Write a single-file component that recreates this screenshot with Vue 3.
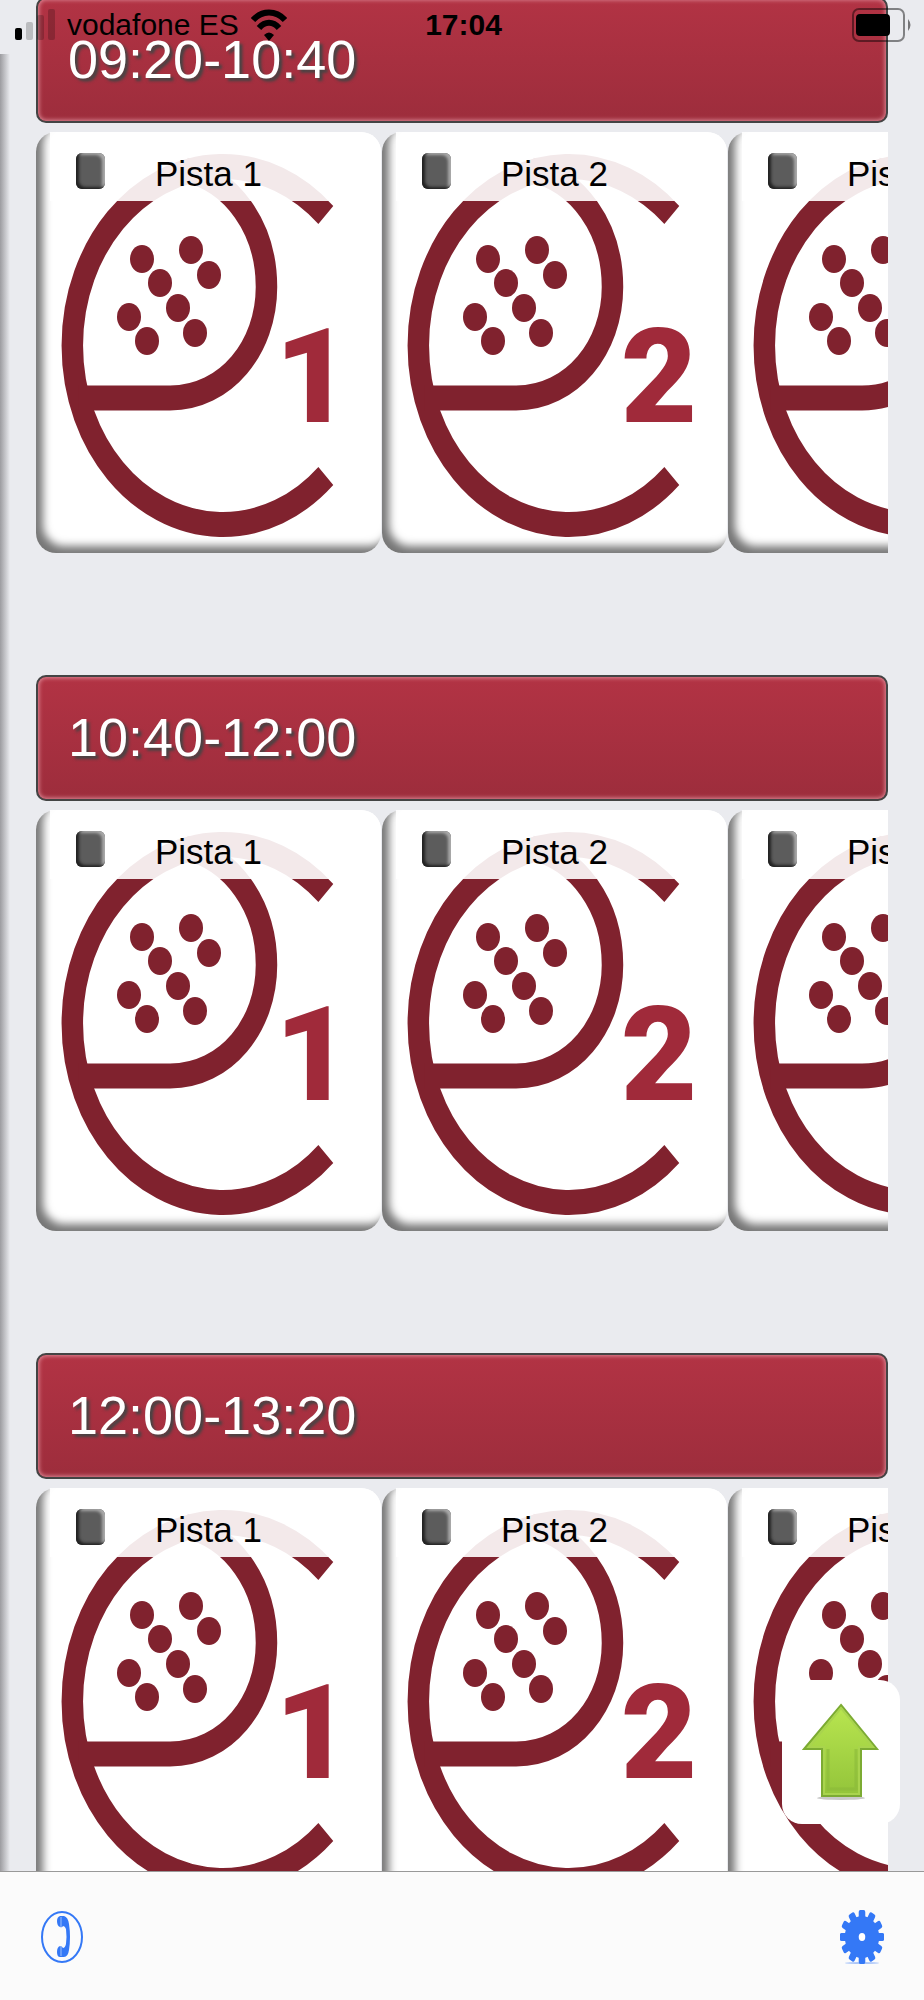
<template>
  <div class="screen">
    <header class="status">
      <div class="carrier">
        <svg class="signal" viewBox="0 0 40 32" aria-hidden="true">
          <rect x="0" y="19" width="7" height="12" rx="2" />
          <rect class="off" x="11" y="13" width="7" height="18" rx="2" />
          <rect class="off" x="22" y="6" width="7" height="25" rx="2" />
          <rect class="off" x="33" y="0" width="7" height="31" rx="2" />
        </svg>
        <span>vodafone ES</span>
        <svg class="wifi" viewBox="0 0 36 32" aria-hidden="true">
          <path d="M2 11 C11 1 25 1 34 11" />
          <path d="M8 19 C14 12 22 12 28 19" />
          <path class="dot" d="M13 26 Q18 21 23 26 L18 32 Z" />
        </svg>
      </div>
      <time class="clock">17:04</time>
      <svg class="battery" viewBox="0 0 60 34" aria-hidden="true">
        <rect class="shell" x="1" y="1" width="51" height="32" rx="6" />
        <rect x="4" y="6" width="34" height="22" rx="4" />
        <path class="cap" d="M56 11 Q61 17 56 23 Z" />
      </svg>
    </header>

    <div class="edge"></div>

    <main ref="list" class="list">
      <section v-for="slot in slots" :key="slot" class="slot">
        <h2>{{ slot }}</h2>
        <div class="courts">
          <article v-for="court in courts" :key="court" class="card">
            <svg class="logo" viewBox="0 0 345 421" aria-hidden="true">
              <g transform="scale(0.86 1)">
                <path d="M337 83 A175 179 0 1 0 337 344" />
                <path d="M174 38 C227 48 268 95 268 155 C268 215 221 266 156 266 H49" />
              </g>
              <ellipse v-for="(d, i) in dots" :key="i" :cx="d[0]" :cy="d[1]" rx="12" ry="14" />
              <text x="277" y="290">{{ court }}</text>
            </svg>
            <div class="title">
              <input :id="slot + court" v-model="picked" type="checkbox" :value="slot + court" />
              <label :for="slot + court">Pista {{ court }}</label>
            </div>
          </article>
        </div>
      </section>
    </main>

    <button class="up" type="button" aria-label="Subir" @click="goTop">
      <svg viewBox="0 0 78 98">
        <defs>
          <linearGradient id="green" x1="0" y1="0" x2="0" y2="1">
            <stop offset="0" stop-color="#b9e650" />
            <stop offset="1" stop-color="#93c43a" />
          </linearGradient>
        </defs>
        <ellipse cx="39" cy="95" rx="24" ry="2" fill="#c9c9c9" />
        <path d="M39 2 L75 46 H59 V93 H20 V46 H2 Z" fill="url(#green)" stroke="#7cab33" stroke-width="2" />
        <path d="M39 5 L71 44 H57 V91 H22 V44 H7 Z" fill="none" stroke="#a9d44e" stroke-width="2" />
        <path d="M54 46 V86 H26 V46" fill="none" stroke="#8ab93a" stroke-width="3" opacity="0.6" />
      </svg>
    </button>

    <nav class="toolbar">
      <button type="button" aria-label="Contacto">
        <svg class="phone" viewBox="0 0 42 52">
          <ellipse cx="21" cy="26" rx="20" ry="25" />
          <path d="M19 5 H23 Q27 6 28 13 Q30 26 28 39 Q27 46 23 46 H19 Q16 46 16 41 Q16 36 19 35 Q21 35 22 37 Q24 37 25 33 Q26 26 25 18 Q24 15 22 15 Q21 17 19 16 Q16 15 16 10 Q16 6 19 5 Z" />
          <path class="seam" d="M20 6 V16 M20 35 V45" />
        </svg>
      </button>
      <button type="button" aria-label="Ajustes">
        <svg class="gear" viewBox="0 0 44 54">
          <ellipse class="base" cx="22" cy="53" rx="17" ry="1" />
          <g transform="translate(22 27) scale(0.82 1)">
            <rect v-for="n in 6" :key="n" x="-4" y="-27" width="8" height="54" rx="2" :transform="`rotate(${n * 30})`" />
            <circle r="21" />
            <circle class="hole" r="4" />
          </g>
        </svg>
      </button>
    </nav>
  </div>
</template>

<script setup>
import { ref } from 'vue'

const slots = ['09:20-10:40', '10:40-12:00', '12:00-13:20']
const courts = [1, 2, 3]
const picked = ref([])
const list = ref(null)

// holes of the racket
const dots = [
  [106, 127], [124, 151], [142, 176], [159, 201],
  [155, 118], [173, 143], [93, 185], [111, 209]
]

function goTop() {
  list.value.scrollTo({ top: 0, behavior: 'smooth' })
}
</script>

<style>
body {
  margin: 0;
  background: #eaebef;
}
</style>

<style scoped>
.screen {
  position: relative;
  display: flex;
  flex-direction: column;
  height: 100vh;
  overflow: hidden;
  background: #eaebef;
  color: #000;
  font-family: "Liberation Sans", Arial, sans-serif;
}

.screen * {
  box-sizing: border-box;
}

/* status bar lies over the scrolled list */
.status {
  position: absolute;
  z-index: 2;
  top: 0;
  left: 0;
  right: 0;
  display: grid;
  grid-template-columns: 1fr auto 1fr;
  align-items: center;
  height: 50px;
  padding: 0 12px 0 15px;
  font-size: 30px;
  line-height: 50px;
}

.carrier {
  display: flex;
  align-items: center;
  gap: 12px;
}

.signal {
  width: 40px;
  height: 32px;
}

.off {
  opacity: 0.2;
}

.wifi {
  width: 36px;
  height: 32px;
  fill: none;
  stroke: #000;
  stroke-width: 6;
}

.wifi .dot {
  fill: #000;
  stroke: none;
}

.clock {
  font-weight: bold;
}

.battery {
  justify-self: end;
  width: 60px;
  height: 34px;
}

.shell {
  fill: none;
  stroke: #000;
  stroke-width: 2;
  opacity: 0.45;
}

.cap {
  opacity: 0.5;
}

.edge {
  position: absolute;
  top: 54px;
  bottom: 0;
  left: 0;
  width: 10px;
  background: linear-gradient(to right, #9c9ca0, #eaebef);
}

.list {
  flex: 1;
  min-height: 0;
  overflow-y: auto;
  scrollbar-width: none;
  padding: 0 36px;
}

.slot {
  margin-bottom: 122px;
}

.slot:first-child {
  margin-top: -3px;
}

h2 {
  height: 126px;
  margin: 0 0 9px;
  padding-left: 30px;
  border: 2px solid #444;
  border-radius: 10px;
  background: linear-gradient(#b23344, #9d2d3c);
  box-shadow: inset 0 0 4px 1px #e08c99;
  color: #fff;
  font-size: 54px;
  font-weight: normal;
  line-height: 120px;
  text-shadow: 3px 3px 3px #444;
}

.courts {
  display: flex;
  gap: 1px;
  overflow: hidden;
}

.card {
  display: grid;
  flex: none;
  width: 345px;
  height: 421px;
  border-radius: 20px;
  background: #fff;
  box-shadow: inset 8px -8px 8px -1px #777;
}

.logo,
.title {
  grid-area: 1 / 1;
}

.logo {
  width: 345px;
  height: 421px;
  fill: #80222e;
}

.logo path {
  fill: none;
  stroke: #80222e;
  stroke-width: 25;
}

.logo text {
  fill: #a02a3a;
  font-family: Roboto, sans-serif;
  font-size: 132px;
  font-weight: 900;
  text-anchor: middle;
}

.title {
  display: flex;
  align-items: center;
  align-self: start;
  gap: 50px;
  height: 69px;
  margin-left: 14px;
  padding: 8px 0 0 26px;
  border-radius: 0 20px 0 0;
  background: rgba(255, 255, 255, 0.9);
  font-size: 35px;
  line-height: 60px;
}

.title label {
  padding-top: 6px;
}

.title input {
  appearance: none;
  width: 29px;
  height: 36px;
  margin: 0;
  border-radius: 6px;
  background: #5c5c5c;
  box-shadow: inset 3px -2px 3px #222, inset -3px 2px 3px #aaa;
}

.title input:checked {
  background: #a02a3a;
}

.up {
  position: absolute;
  right: 24px;
  bottom: 176px;
  width: 118px;
  height: 144px;
  padding: 0;
  border: 0;
  border-radius: 20px;
  background: #fff;
}

.up svg {
  display: block;
  width: 78px;
  height: 98px;
  margin: 0 auto;
}

.toolbar {
  z-index: 1;
  display: flex;
  align-items: center;
  justify-content: space-between;
  height: 129px;
  padding: 2px 40px 0;
  border-top: 1px solid #999;
  background: #fbfbfb;
}

.toolbar button {
  padding: 0;
  border: 0;
  background: none;
}

.toolbar svg {
  display: block;
  fill: #3478f6;
}

.phone {
  width: 44px;
  height: 52px;
}

.phone ellipse {
  fill: none;
  stroke: #3478f6;
  stroke-width: 2;
}

.seam {
  stroke: #9dc0fb;
  stroke-width: 1;
}

.gear {
  width: 44px;
  height: 54px;
}

.base {
  opacity: 0.4;
}

.hole {
  fill: #fff;
}
</style>
